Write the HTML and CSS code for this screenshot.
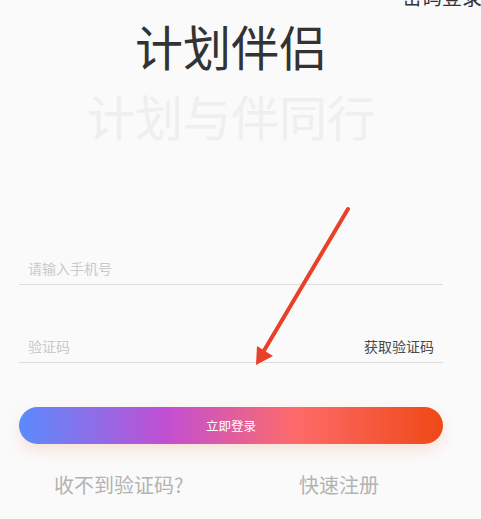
FILE: index.html
```html
<!DOCTYPE html>
<html lang="zh-CN">
  <head>
    <meta charset="UTF-8" />
    <meta name="viewport" content="width=device-width, initial-scale=1.0" />
    <title>计划伴侣 - 登录</title>
    <link rel="stylesheet" href="styles.css">
  </head>
  <body>
    <div class="topbar">
      <a class="switch-login" href="#">密码登录</a>
    </div>
    <div class="page">
      <h1 class="title">计划伴侣</h1>
      <p class="slogan">计划与伴同行</p>

      <div class="field phone">
        <input type="tel" placeholder="请输入手机号" />
      </div>
      <div class="field code">
        <input type="text" placeholder="验证码" />
        <button class="get-code">获取验证码</button>
      </div>

      <button class="login-btn">立即登录</button>

      <div class="links">
        <a href="#">收不到验证码?</a>
        <a href="#">快速注册</a>
      </div>
    </div>

    <svg class="arrow" width="481" height="519" viewBox="0 0 481 519">
      <line x1="348" y1="209" x2="262" y2="354" stroke="#e9402a" stroke-width="4" stroke-linecap="round" />
      <polygon points="256,365 257,346 273,356" fill="#e9402a" />
    </svg>
  </body>
</html>
```

FILE: styles.css
```css
body {
  margin: 0;
  background-color: #fafafa;
  font-family: "Noto Sans CJK SC", "Noto Sans", sans-serif;
  color: #333;
  overflow: hidden;
  height: 519px;
  position: relative;
}

a {
  text-decoration: none;
}

.topbar {
  height: 8px;
  padding-left: 402px;
}

.switch-login {
  display: block;
  margin-top: -13px;
  font-size: 20px;
  line-height: 20px;
  color: #333;
  white-space: nowrap;
}

.page {
  width: 424px;
  margin-left: 19px;
}

.title {
  margin: 26px 0 0;
  font-size: 48px;
  line-height: 48px;
  font-weight: 400;
  color: #333;
  text-align: center;
}

.slogan {
  margin: 22px 0 0;
  font-size: 48px;
  line-height: 48px;
  color: #efefef;
  text-align: center;
}

.field {
  display: flex;
  align-items: flex-end;
  padding: 0 9px 6px;
  box-sizing: border-box;
  height: 41px;
  border-bottom: 1px solid #dddddf;
}

.phone {
  margin-top: 105px;
}

.code {
  margin-top: 37px;
}

.field input {
  flex: 1;
  border: none;
  outline: none;
  background: transparent;
  padding: 0;
  font-family: inherit;
  font-size: 14px;
  line-height: 20px;
  height: 20px;
  color: #333;
}

.field input::placeholder {
  color: #c9c9cd;
}

.get-code {
  border: none;
  background: none;
  padding: 0;
  font-family: inherit;
  font-size: 14px;
  line-height: 20px;
  color: #4a4a4a;
  cursor: pointer;
}

.login-btn {
  display: block;
  width: 100%;
  height: 37px;
  margin-top: 44px;
  border: none;
  border-radius: 19px;
  background: linear-gradient(90deg, #5a8bfd 0%, #c24fd2 35%, #fd6b6b 65%, #ee4816 100%);
  box-shadow: 0 6px 14px rgba(240, 110, 60, 0.18);
  color: white;
  font-family: inherit;
  font-size: 12.5px;
  cursor: pointer;
}

.links {
  margin-top: 29px;
  display: flex;
  justify-content: space-between;
  padding: 0 64px 0 35px;
}

.links a {
  font-size: 20px;
  line-height: 24px;
  color: #b3b3b3;
}

.arrow {
  position: absolute;
  left: 0;
  top: 0;
  pointer-events: none;
}
```
